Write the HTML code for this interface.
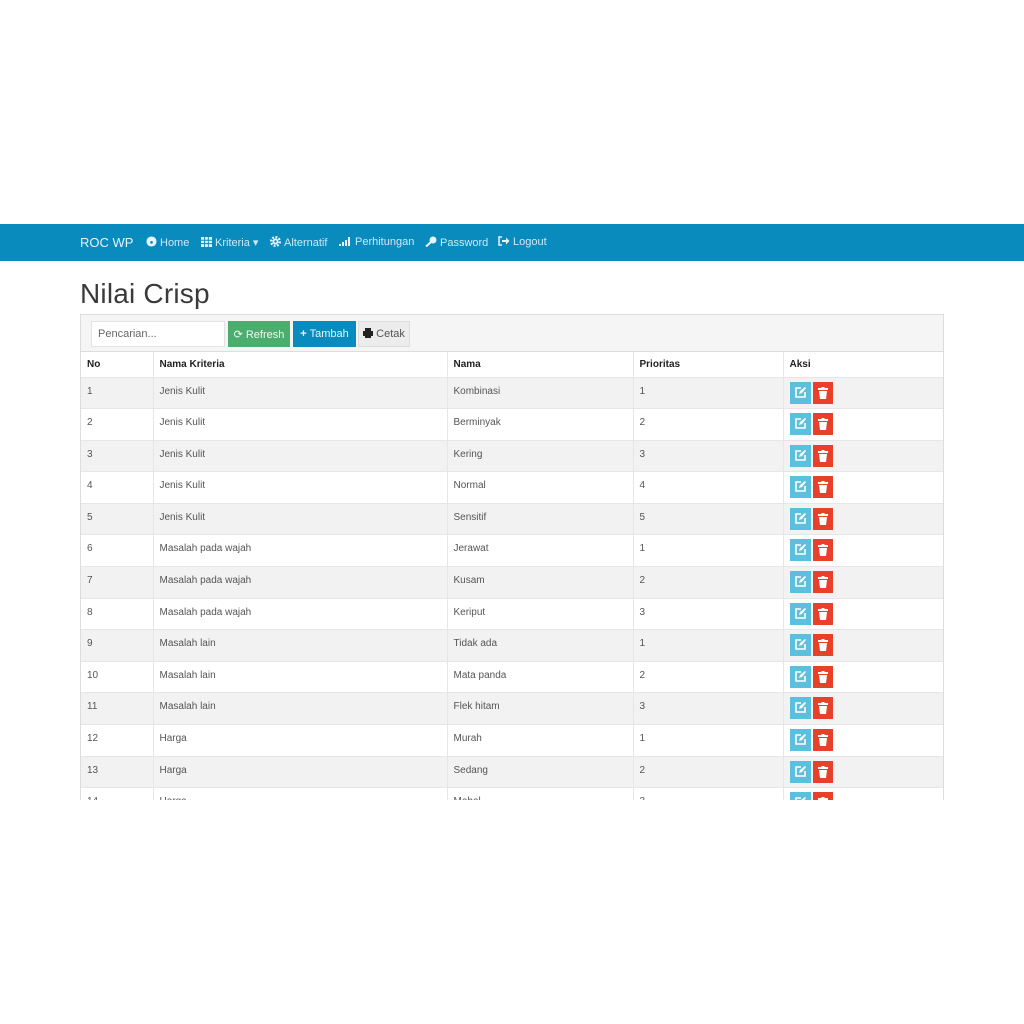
<!DOCTYPE html>
<html><head><meta charset="utf-8"><style>
*{box-sizing:border-box;margin:0;padding:0}
body{width:1024px;height:1024px;background:#fff;font-family:"Liberation Sans",sans-serif;position:relative;overflow:hidden;color:#333}
.nav{position:absolute;left:0;top:224px;width:1024px;height:37px;background:#0a8bbd;color:#cfe9f4;font-size:11px}
.nav span{position:absolute;top:12px;white-space:nowrap}
.nav svg{vertical-align:-1px;margin-right:3px}
.brand{font-size:13px;color:#e8f5fb;top:11px!important}
h1{position:absolute;left:80px;top:278px;font-size:28px;font-weight:normal;color:#3a3a3a;letter-spacing:0.2px}
.panel{position:absolute;left:80px;top:314px;width:864px;height:486px;border:1px solid #ddd;border-bottom:none;overflow:hidden}
.tb{height:37px;background:#f5f5f5;border-bottom:1px solid #ddd;position:relative}
.in{position:absolute;left:10px;top:6px;width:134px;height:26px;background:#fff;border:1px solid #e3e3e3;font-size:11px;color:#666;padding:6px 6px}
.b{position:absolute;top:6px;height:26px;font-size:11px;padding:7px 0;text-align:center}
table{border-collapse:collapse;width:862px;font-size:10px}
td,th{border-left:1px solid #e6e6e6;text-align:left;padding:0 6px;vertical-align:top}
td:first-child,th:first-child{border-left:none}
th{height:25px;font-weight:bold;color:#222;padding-top:7px;font-size:10px}
td{height:31.6px;padding-top:8px;color:#555;border-top:1px solid #e6e6e6}
tr:nth-child(odd) td{background:#f2f2f2}
.e,.d{display:inline-block;width:21px;height:22px;margin-top:-4px;vertical-align:top;position:relative}
.e{background:#5bc0de}.d{background:#e8412b;margin-left:2px;width:20px}
.e svg,.d svg{position:absolute;left:5px;top:5px}
</style></head><body>
<div class="nav">
<span class="brand" style="left:80px">ROC WP</span>
<span style="left:146px"><svg width="11" height="11" viewBox="0 0 12 12"><circle cx="6" cy="6" r="5.5" fill="#e8f5fb"/><circle cx="6" cy="7" r="1.5" fill="#0a8bbd"/></svg>Home</span>
<span style="left:201px"><svg width="11" height="10" viewBox="0 0 11 10"><rect width="11" height="10" fill="#e8f5fb"/><path d="M0 3.3h11M0 6.6h11M3.6 0v10M7.3 0v10" stroke="#0a8bbd"/></svg>Kriteria ▾</span>
<span style="left:270px"><svg width="11" height="11" viewBox="0 0 12 12"><circle cx="6" cy="6" r="4.5" fill="none" stroke="#e8f5fb" stroke-width="3" stroke-dasharray="2 1.5"/><circle cx="6" cy="6" r="3" fill="#e8f5fb"/><circle cx="6" cy="6" r="1.3" fill="#0a8bbd"/></svg>Alternatif</span>
<span style="left:339px"><svg width="13" height="10" viewBox="0 0 13 10"><path d="M1 10v-2M4 10v-4M7 10v-6M10 10v-9" stroke="#e8f5fb" stroke-width="2"/></svg>Perhitungan</span>
<span style="left:425px"><svg width="12" height="11" viewBox="0 0 12 11"><circle cx="8" cy="4" r="3.5" fill="#e8f5fb"/><path d="M6 6L1 10.5" stroke="#e8f5fb" stroke-width="2"/></svg>Password</span>
<span style="left:498px"><svg width="12" height="10" viewBox="0 0 12 10"><path d="M4 1H1v8h3" stroke="#e8f5fb" stroke-width="1.5" fill="none"/><path d="M4 4h4V1.5L11.5 5 8 8.5V6H4z" fill="#e8f5fb"/></svg>Logout</span>
</div>
<h1>Nilai Crisp</h1>
<div class="panel">
<div class="tb">
<div class="in">Pencarian...</div>
<div class="b" style="left:147px;width:62px;background:#4cae6e;color:#eefaf2">⟳ Refresh</div>
<div class="b" style="left:212px;width:63px;background:#0a8bbd;color:#e8f5fb"><b>+</b> Tambah</div>
<div class="b" style="left:277px;width:52px;background:#ececec;border:1px solid #ddd;color:#555;padding-top:6px"><svg width="10" height="10" viewBox="0 0 10 10" style="vertical-align:-1px"><rect x="2" y="0" width="6" height="3" fill="#222"/><rect x="0" y="3" width="10" height="5" fill="#222"/><rect x="2" y="6" width="6" height="4" fill="#222"/></svg> Cetak</div>
</div>
<table>
<tr><th style="width:72px">No</th><th style="width:294px">Nama Kriteria</th><th style="width:186px">Nama</th><th style="width:150px">Prioritas</th><th>Aksi</th></tr>
<tbody id="tb"></tbody>
</table>
</div>
<script>
var r=[["Jenis Kulit","Kombinasi",1],["Jenis Kulit","Berminyak",2],["Jenis Kulit","Kering",3],["Jenis Kulit","Normal",4],["Jenis Kulit","Sensitif",5],["Masalah pada wajah","Jerawat",1],["Masalah pada wajah","Kusam",2],["Masalah pada wajah","Keriput",3],["Masalah lain","Tidak ada",1],["Masalah lain","Mata panda",2],["Masalah lain","Flek hitam",3],["Harga","Murah",1],["Harga","Sedang",2],["Harga","Mahal",3]];
var e='<span class="e"><svg width="11" height="11" viewBox="0 0 11 11"><path d="M6 1H1v9h9V5" stroke="#fff" stroke-width="1.6" fill="none"/><path d="M4 7l1-3 5-4 1 1-4 5z" fill="#fff"/></svg></span>';
var d='<span class="d"><svg width="10" height="12" viewBox="0 0 10 12"><rect x="0" y="1" width="10" height="2" fill="#fff"/><rect x="3.5" y="0" width="3" height="1.5" fill="#fff"/><path d="M1 4h8l-1 8H2z" fill="#fff"/></svg></span>';
var h='';r.forEach(function(x,i){h+='<tr><td>'+(i+1)+'</td><td>'+x[0]+'</td><td>'+x[1]+'</td><td>'+x[2]+'</td><td>'+e+d+'</td></tr>'});
document.getElementById('tb').innerHTML=h;
</script>
</body></html>
